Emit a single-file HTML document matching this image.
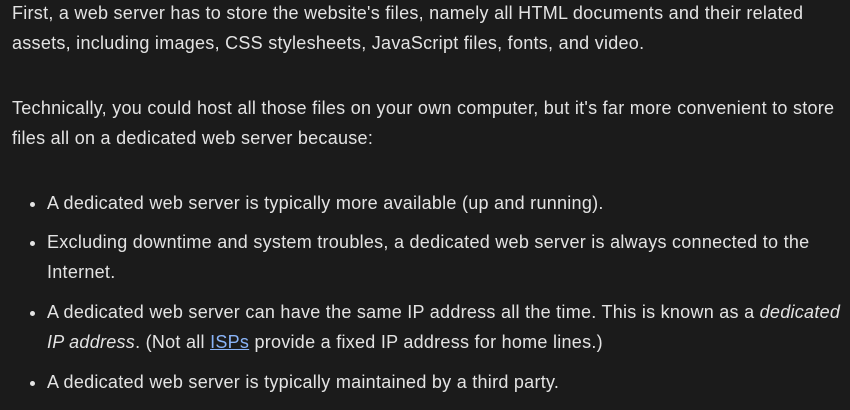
<!DOCTYPE html>
<html><head><meta charset="utf-8"><style>
html,body{margin:0;padding:0;background:#1b1b1b;width:850px;height:410px;overflow:hidden}
body{font-family:"Liberation Sans",sans-serif;font-size:18px;letter-spacing:0.27px;line-height:30px;color:#e3e3e3;padding:0 0 0 12px;}
.c{position:relative;top:-2px;width:845px;white-space:nowrap}
p{margin:0 0 35px 0}
ul{margin:35px 0 0 0;padding:0 0 0 35px}
li{margin:0 0 10px 0}
li:first-child{margin-bottom:9px}
a{color:#8ab4f8;text-decoration:underline}
</style></head><body><div class="c">
<p>First, a web server has to store the website's files, namely all HTML documents and their related<br>assets, including images, CSS stylesheets, JavaScript files, fonts, and video.</p>
<p>Technically, you could host all those files on your own computer, but it's far more convenient to store<br>files all on a dedicated web server because:</p>
<ul>
<li>A dedicated web server is typically more available (up and running).</li>
<li>Excluding downtime and system troubles, a dedicated web server is always connected to the<br>Internet.</li>
<li>A dedicated web server can have the same IP address all the time. This is known as a <i>dedicated<br>IP address</i>. (Not all <a>ISPs</a> provide a fixed IP address for home lines.)</li>
<li>A dedicated web server is typically maintained by a third party.</li>
</ul>
</div></body></html>
